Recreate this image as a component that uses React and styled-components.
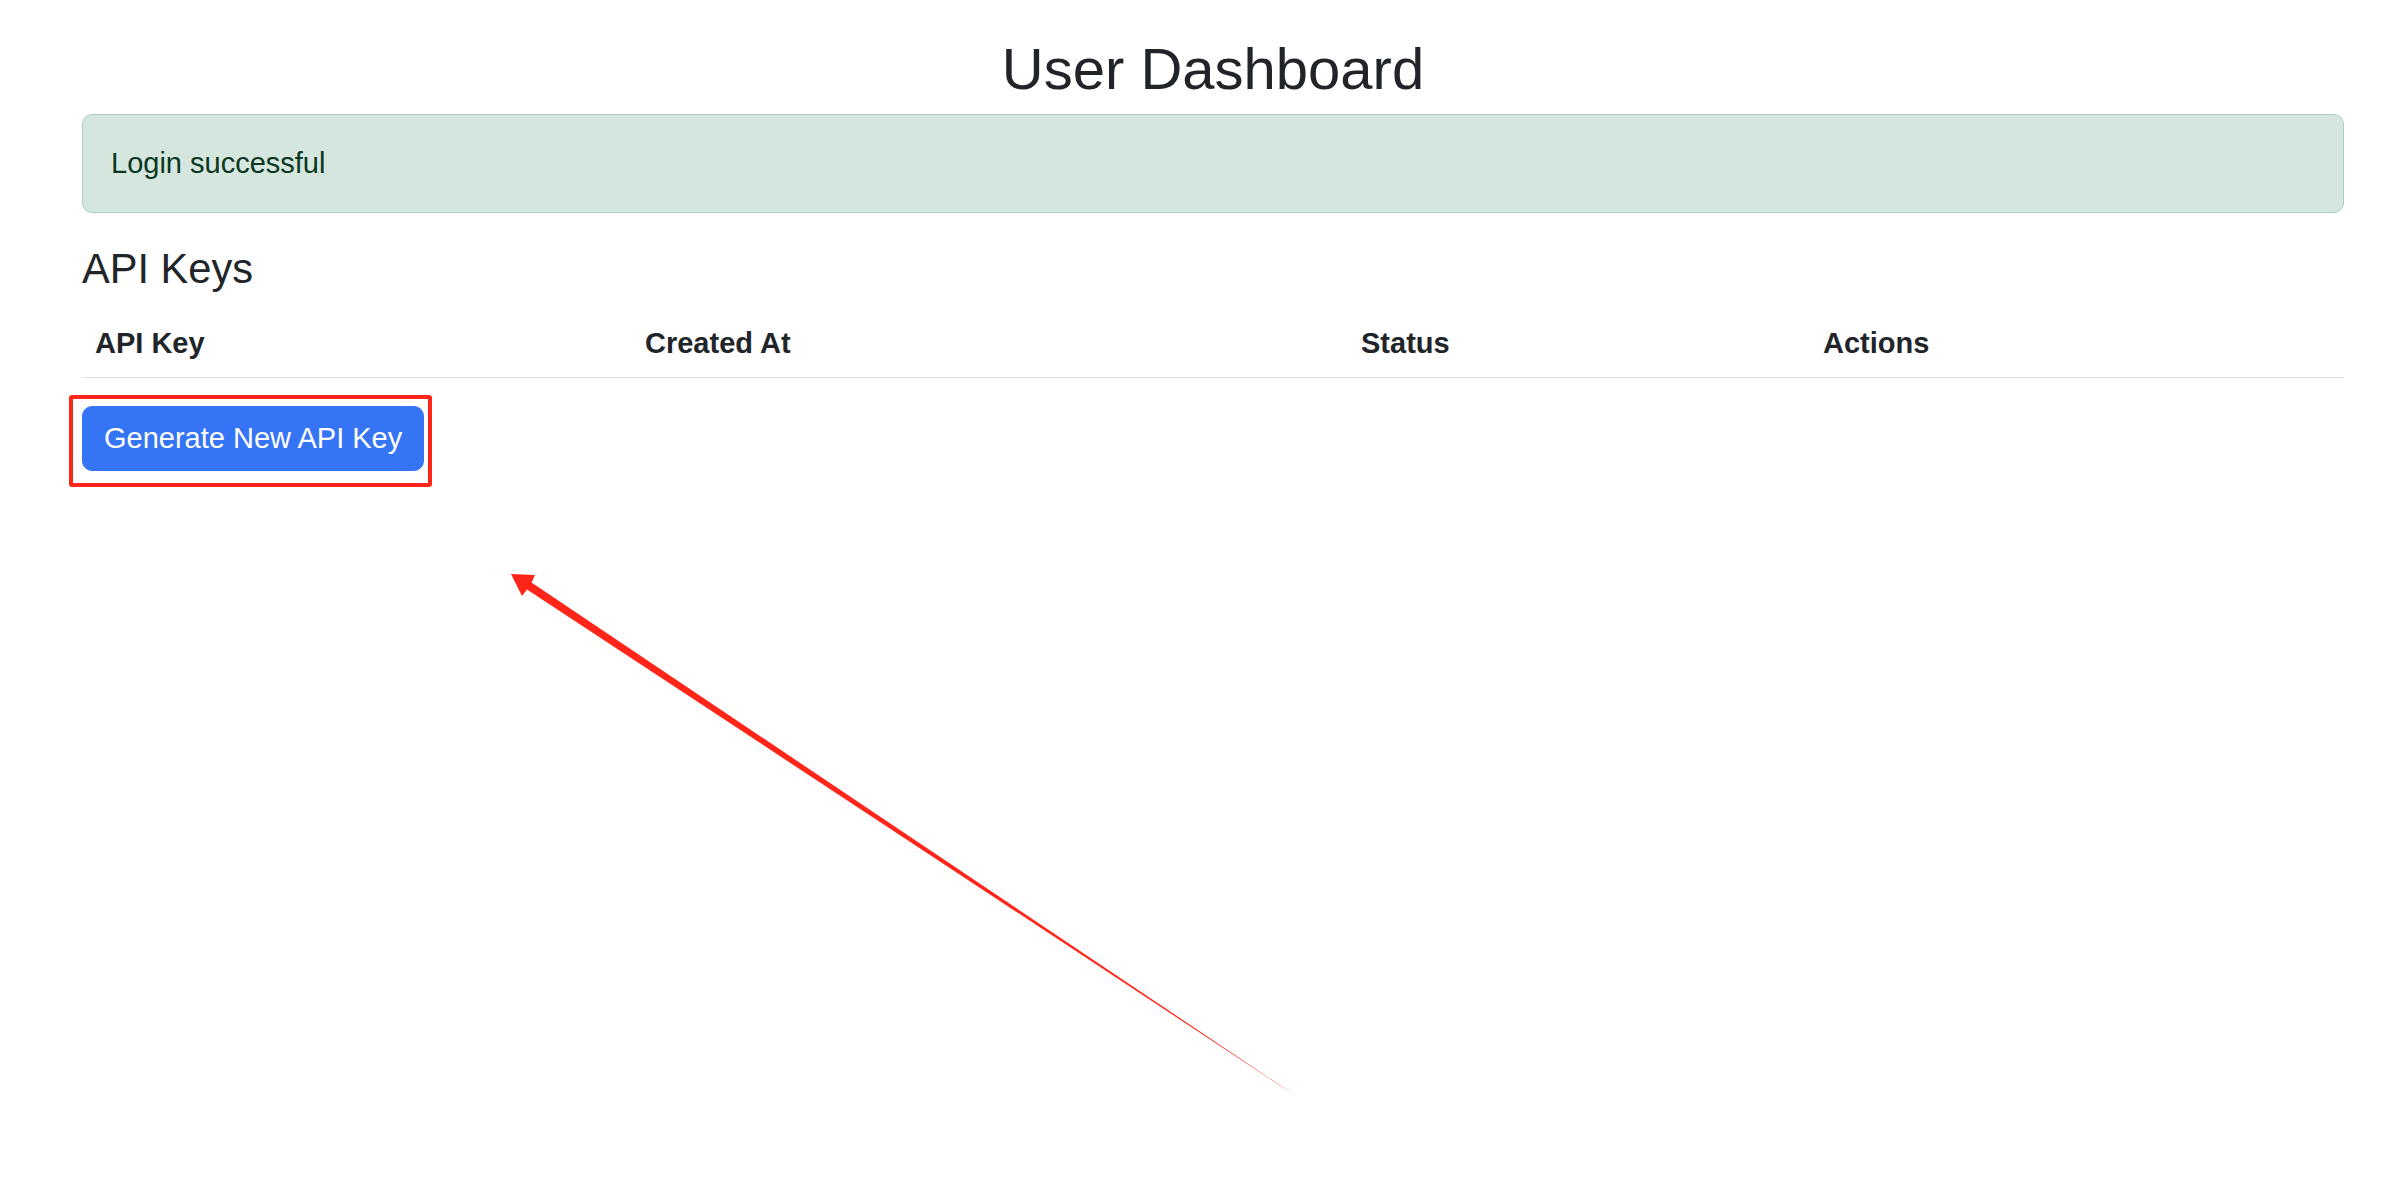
import React from 'react';
import styled, {createGlobalStyle} from 'styled-components';

const GlobalStyle = createGlobalStyle`
    html, body {
        margin: 0;
        padding: 0;
        background: #fff;
    }
    body {
        font-family: "Liberation Sans", Arial, sans-serif;
        font-size: 29px;
        line-height: 1.5;
        color: #212529;
    }
    * {
        box-sizing: border-box;
    }
`;

const Page = styled.div`
    position: relative;
    min-height: 1196px;
    padding: 34px 60px 0 82px;
`;

const Title = styled.h1`
    margin: 0 0 10px;
    font-size: 58px;
    font-weight: 400;
    line-height: 1.2;
    text-align: center;
`;

const Alert = styled.div`
    margin-bottom: 31px;
    padding: 27px 28px;
    line-height: 43px;
    color: #0a3622;
    background: #d4e6dd;
    border: 1px solid #a9d0bd;
    border-radius: 10px;
`;

const SectionTitle = styled.h3`
    margin: 0 0 16px;
    font-size: 41.6px;
    font-weight: 400;
    line-height: 1.2;
`;

const Table = styled.table`
    width: 100%;
    table-layout: fixed;
    border-collapse: collapse;
    margin-bottom: 28px;
`;

const Th = styled.th`
    width: ${p => p.$w}px;
    padding: 12px 13px;
    line-height: 43px;
    text-align: left;
    font-weight: 700;
    border-bottom: 1px solid #dee2e6;
`;

const ButtonWrap = styled.div`
    position: relative;
    display: inline-block;
`;

const Button = styled.button`
    display: block;
    padding: 10px 21px;
    font-family: inherit;
    font-size: 29px;
    line-height: 43px;
    color: #fff;
    background: #3674f6;
    border: 1px solid #3674f6;
    border-radius: 10px;
    cursor: pointer;
`;

// red annotation frame drawn over the screenshot
const Highlight = styled.div`
    position: absolute;
    top: -11px;
    left: -13px;
    right: -8px;
    bottom: -16px;
    border: 4px solid #ff2619;
    border-radius: 3px;
    pointer-events: none;
`;

const ArrowLayer = styled.svg`
    position: absolute;
    top: 0;
    left: 0;
    pointer-events: none;
`;

const columns = [
    {label: 'API Key', w: 550},
    {label: 'Created At', w: 716},
    {label: 'Status', w: 462},
    {label: 'Actions', w: 534},
];

export default function App() {
    return <>
        <GlobalStyle/>
        <Page>
            <Title>User Dashboard</Title>

            <Alert>Login successful</Alert>

            <SectionTitle>API Keys</SectionTitle>

            <Table>
                <thead>
                    <tr>
                        {columns.map(c => <Th key={c.label} $w={c.w}>{c.label}</Th>)}
                    </tr>
                </thead>
                <tbody/>
            </Table>

            <ButtonWrap>
                <Button>Generate New API Key</Button>
                <Highlight/>
            </ButtonWrap>

            <ArrowLayer width="2404" height="1196" viewBox="0 0 2404 1196">
                <polygon
                    fill="#ff2619"
                    points="511,574 535,575 531.5,582.5 1296,1096 527,589.5 522,596"
                />
            </ArrowLayer>
        </Page>
    </>;
}
